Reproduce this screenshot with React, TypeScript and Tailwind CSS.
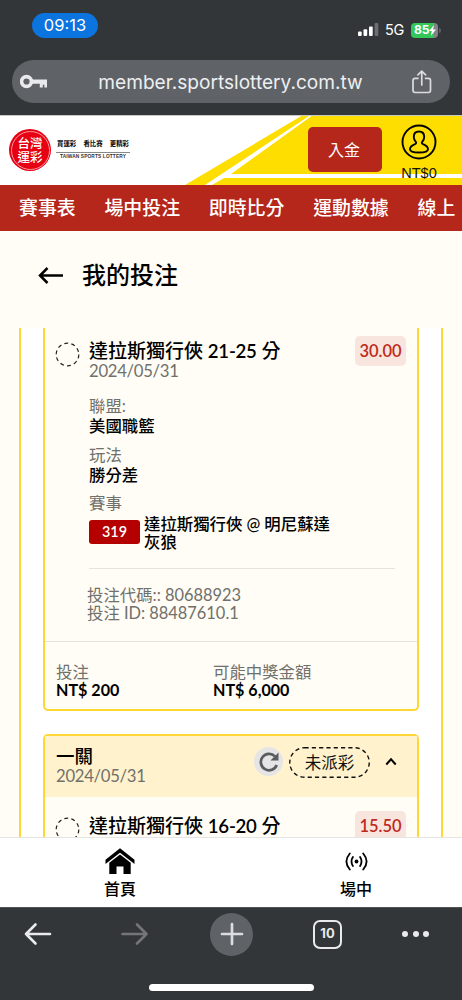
import React from "react";

const LATO = "font-['Lato','Noto_Sans_CJK_TC',sans-serif]";
const CJK = "font-['Noto_Sans_CJK_TC',sans-serif]";

function StatusBar() {
  return (
    <div className="flex h-[60px] items-start justify-between pl-8 pr-[21px] pt-[13px]">
      <div className="flex h-[25px] w-[66px] items-center justify-center rounded-full bg-[#0b74de] font-['Inter',sans-serif] text-[16.5px] font-normal text-white">
        09:13
      </div>
      <div className="flex h-[16px] items-center pt-[17px]">
        <svg width="21" height="14" viewBox="0 0 21 14" className="mr-[6px]">
          <rect x="0" y="8.5" width="3.7" height="4.5" rx="1" fill="#fff" />
          <rect x="5.5" y="6.3" width="3.7" height="6.7" rx="1" fill="#fff" />
          <rect x="11" y="3.4" width="3.7" height="9.6" rx="1" fill="#fff" />
          <rect x="16.6" y="0" width="3.7" height="13" rx="1" fill="#6c6e70" />
        </svg>
        <span className="mr-[6px] w-[20px] font-['Inter',sans-serif] text-[14.5px] leading-4 tracking-[-0.2px] text-white">5G</span>
        <div className="flex h-[15px] w-[27px] items-center rounded-[4px] bg-[linear-gradient(90deg,#33c759_85%,#818487_85%)] pl-[3px]">
          <span className="font-['Inter',sans-serif] text-[12px] font-bold leading-3 text-white">85</span>
          <svg width="7" height="11" viewBox="0 0 7 11">
            <path d="M5 0 0 6h2.8L1.8 11 7 4.5H4z" fill="#fff" />
          </svg>
        </div>
        <div className="ml-px h-[5px] w-[2px] rounded-r-full bg-[#5c5f61]" />
      </div>
    </div>
  );
}

function AddressBar() {
  return (
    <div className="mx-3 flex h-[43px] items-center rounded-full bg-[#5f6368] pl-2 pr-[18px]">
      <svg width="28" height="16" viewBox="0 0 28 16">
        <circle cx="6.5" cy="7.5" r="4.9" fill="none" stroke="#e8eaed" strokeWidth="3.6" />
        <path d="M12 5.5h15v8h-2.6v-2.7h-1.6v2.7h-3v-3.8H12z" fill="#e8eaed" />
      </svg>
      <div className="flex-1 pl-[1px] text-center font-['Inter',sans-serif] text-[19.1px] leading-6 text-[#eeeff0]">
        member.sportslottery.com.tw
      </div>
      <svg width="20" height="24" viewBox="0 0 20 24" fill="none" stroke="#dadce0" strokeWidth="1.7" strokeLinecap="round" strokeLinejoin="round">
        <path d="M6 8.3H3.2Q1 8.3 1 10.5V20.3Q1 22.5 3.2 22.5H16.3Q18.5 22.5 18.5 20.3V10.5Q18.5 8.3 16.3 8.3H13.5" />
        <path d="M9.75 15V1.3M5.9 4.9 9.75 1.2 13.6 4.9" />
      </svg>
    </div>
  );
}

function SiteHeader() {
  return (
    <div className="relative h-[70px] overflow-hidden bg-white">
      <svg className="absolute inset-0" width="462" height="70" viewBox="0 0 462 70">
        <path d="M303 0H462V70H185z" fill="#fedd00" />
        <path d="M310.5 0 205 70H212L231 59 313 0z" fill="#fff" />
        <path d="M227 59H462V63H219z" fill="#fff" />
        <path d="M0 .5H462" stroke="#c9c9c4" strokeWidth="1" />
      </svg>
      <div className="relative flex h-full items-start">
        <div className="ml-[9px] mt-[14px] flex size-[42px] items-center justify-center rounded-full bg-[#e60012]">
          <div className={`flex size-[39px] flex-col items-center justify-center rounded-full border border-[#f79aa0] pb-[1px] text-[12.5px] font-medium leading-[13.5px] text-white ${CJK}`}>
            <span>台灣</span>
            <span>運彩</span>
          </div>
        </div>
        <div className="ml-[5px] mt-[23px] w-[74px] text-center">
          <div className={`flex justify-between border-b border-[#888] px-[1px] pb-[2px] text-[6.4px] font-bold leading-[12px] text-black ${CJK}`}>
            <span>買運彩</span>
            <span>看比賽</span>
            <span>更精彩</span>
          </div>
          <div className="whitespace-nowrap pt-[1px] font-['Liberation_Sans',sans-serif] text-[4.8px] font-bold leading-[6px] tracking-[0.14px] text-[#333]">
            TAIWAN SPORTS LOTTERY
          </div>
        </div>
        <button className={`ml-[178px] mt-[12px] h-[45px] w-[74px] rounded-[5px] bg-[#b5261b] pb-[1px] pr-[2px] text-[16px] leading-6 text-white ${CJK}`}>
          入金
        </button>
        <div className="ml-[17px] mt-[9px] flex w-[40px] flex-col items-center">
          <svg width="36" height="36" viewBox="0 0 36 36" fill="none" stroke="#050500">
            <circle cx="18" cy="18" r="16.5" strokeWidth="1.9" />
            <path strokeWidth="1.9" strokeLinejoin="round" d="M18 7.5C14.5 7.5 12.8 9.8 12.8 12.9C12.8 15 13.7 16.7 14.8 17.9C15.5 18.8 15.1 19.6 14 20.1C11 21.3 9 22.4 9 25.2C9 27.5 12 28.5 18 28.5S27 27.5 27 25.2C27 22.4 25 21.3 22 20.1C20.9 19.6 20.5 18.8 21.2 17.9C22.3 16.7 23.2 15 23.2 12.9C23.2 9.8 21.5 7.5 18 7.5z" />
          </svg>
          <span className="mt-[4px] font-['Liberation_Sans',sans-serif] text-[14.5px] leading-[18px] text-[#151500]">NT$0</span>
        </div>
      </div>
    </div>
  );
}

function SiteNav() {
  return (
    <nav className={`flex h-[46px] items-center gap-[28.8px] overflow-hidden whitespace-nowrap bg-[#b5261b] pl-[19px] text-[18.9px] font-medium leading-[46px] text-white ${CJK}`}>
      {["賽事表", "場中投注", "即時比分", "運動數據", "線上"].map((t) => (
        <span key={t} className="-mt-[2px]">{t}</span>
      ))}
    </nav>
  );
}

function BetRow({ team, range, odds }: { team: string; range: string; odds: string }) {
  return (
    <div className="flex items-start">
      <svg className="ml-[10px] mt-px shrink-0" width="25" height="25" viewBox="0 0 25 25">
        <circle cx="12.5" cy="12.5" r="11.3" fill="none" stroke="#222" strokeWidth="1.2" strokeDasharray="3.9 3.2" />
      </svg>
      <div className="ml-[9px] flex-1">
        <div className="text-[19px] font-medium leading-[20px] text-black">
          {team} <span className="text-[18.6px] font-semibold tracking-[-0.25px]">{range}</span> 分
        </div>
        <div className="text-[16.7px] leading-[20px] tracking-[-0.3px] text-[#70706c]">2024/05/31</div>
      </div>
      <div className="-mt-[5px] mr-[11px] flex h-[30px] w-[51px] items-center justify-center rounded-[5px] bg-[#f8e6de] text-[16.5px] font-semibold text-[#bd2a20]">
        {odds}
      </div>
    </div>
  );
}

function Field({ label, value }: { label: string; value: string }) {
  return (
    <div className="mb-[8.5px] text-[16.4px]">
      <div className="leading-[20px] text-[#70706c]">{label}</div>
      <div className="font-medium leading-[20px] text-black">{value}</div>
    </div>
  );
}

function BetList() {
  return (
    <div className="h-[509px] overflow-hidden">
      <div className="ml-[19px] w-[424px] border-x-2 border-[#fdd835] bg-white px-[22px]">
        <section className="h-[383px] rounded-b-[5px] border-2 border-t-0 border-[#fdd835] bg-[#fffdf5] pt-[13px]">
          <BetRow team="達拉斯獨行俠" range="21-25" odds="30.00" />
          <div className="ml-[44px] pt-[15px]">
            <Field label="聯盟:" value="美國職籃" />
            <Field label="玩法" value="勝分差" />
            <div className="text-[16.4px] leading-[20px] text-[#70706c]">賽事</div>
            <div className="mt-[1px] flex items-start">
              <div className="mr-[4px] mt-[6px] flex h-[24px] w-[51px] items-center justify-center rounded-[3px] bg-[#b50000] text-[14.4px] font-semibold text-white">319</div>
              <div className="w-[196px] pt-px text-[16.4px] font-medium leading-[17.5px] text-black">
                達拉斯獨行俠 @ 明尼蘇達灰狼
              </div>
            </div>
            <div className="mt-[18px] w-[306px] border-t border-[#e5e3dc]" />
            <div className="-ml-[2px] mt-[17px] text-[16.4px] leading-[18px] text-[#70706c]">
              <div>投注代碼:: 80688923</div>
              <div>投注 ID: 88487610.1</div>
            </div>
          </div>
          <div className="mt-[19px] flex border-t border-[#e5e3dc] pt-[21px] text-[16.4px] leading-[18px]">
            <div className="ml-[11px] w-[157px]">
              <div className="text-[#70706c]">投注</div>
              <div className="text-[16.1px] font-bold text-black">NT$ 200</div>
            </div>
            <div>
              <div className="text-[#70706c]">可能中獎金額</div>
              <div className="text-[16.1px] font-bold text-black">NT$ 6,000</div>
            </div>
          </div>
        </section>

        <section className="mt-[23px] h-[140px] rounded-t-[5px] border-2 border-b-0 border-[#fdd835] bg-[#fffdf5]">
          <div className="flex h-[61px] items-start bg-[#fff2cc]">
            <div className="ml-[11px] w-[198px] pt-[10px]">
              <div className="text-[18.5px] font-medium leading-[20px] text-black">一關</div>
              <div className="text-[16.7px] leading-[20px] tracking-[-0.3px] text-[#70706c]">2024/05/31</div>
            </div>
            <div className="mt-[11px] flex size-[29px] items-center justify-center rounded-full bg-[#e5e5e6]">
              <svg width="20" height="20" viewBox="0 0 20 20">
                <path d="M16 4.4A8.2 8.2 0 1 0 17.7 13" fill="none" stroke="#5a5c60" strokeWidth="2.7" />
                <path d="M19.5 .5V8.6H11.4z" fill="#5a5c60" />
              </svg>
            </div>
            <div className="relative ml-[6px] mt-[11px] h-[31px] w-[81px]">
              <svg className="absolute inset-0" width="81" height="31" viewBox="0 0 81 31">
                <rect x=".75" y=".75" width="79.5" height="29.5" rx="14.75" fill="none" stroke="#111" strokeWidth="1.4" strokeDasharray="4.2 3.1" />
              </svg>
              <div className="text-center text-[16.5px] leading-[32px] text-[#111]">未派彩</div>
            </div>
            <svg className="ml-[15px] mt-[21px]" width="12" height="9" viewBox="0 0 12 9">
              <path d="M1.3 7.5 6 2.3 10.7 7.5" fill="none" stroke="#000" strokeWidth="2" />
            </svg>
          </div>
          <div className="pt-[19px]">
            <BetRow team="達拉斯獨行俠" range="16-20" odds="15.50" />
          </div>
        </section>
      </div>
    </div>
  );
}

function TabBar() {
  return (
    <div className={`flex h-[70px] border-t border-[#e4e4e4] bg-white text-[16px] font-medium leading-[20px] text-black ${CJK}`}>
      <div className="ml-[85px] flex w-[70px] flex-col items-center">
        <svg className="mt-[10px]" width="30" height="27" viewBox="0 0 30 27">
          <path d="M15 .3 29.5 11.8V16L15 4.7.5 16V11.8z" fill="#000" />
          <path d="M15 6.5 25.7 14.8V26H18.5V18.5H11.5V26H4.3V14.8z" fill="#000" />
        </svg>
        <span className="mt-[3px]">首頁</span>
      </div>
      <div className="ml-[166px] flex w-[70px] flex-col items-center">
        <svg className="mt-[14px]" width="23" height="19" viewBox="0 0 23 19" fill="none" stroke="#000" strokeWidth="1.8" strokeLinecap="round">
          <circle cx="11.5" cy="9.5" r="1.9" fill="#000" stroke="none" />
          <path d="M7.9 5Q5.1 9.5 7.9 14M15.1 5Q17.9 9.5 15.1 14M4.8 1.5Q-2 9.5 4.8 17.5M18.2 1.5Q25 9.5 18.2 17.5" />
        </svg>
        <span className="mt-[7px]">場中</span>
      </div>
    </div>
  );
}

function BrowserToolbar() {
  return (
    <div className="h-[93px] border-t border-[#515355] bg-[#333639]">
      <div className="flex h-[52px] items-center">
        <svg className="ml-[24px]" width="28" height="24" viewBox="0 0 28 24" fill="none" stroke="#e8eaed" strokeWidth="2.6" strokeLinecap="round" strokeLinejoin="round">
          <path d="M26 12H2M11.5 2.5 2 12 11.5 21.5" />
        </svg>
        <svg className="ml-[69px]" width="28" height="24" viewBox="0 0 28 24" fill="none" stroke="#737577" strokeWidth="2.6" strokeLinecap="round" strokeLinejoin="round">
          <path d="M1.5 12H25.5M16 2.5 25.5 12 16 21.5" />
        </svg>
        <div className="ml-[61px] flex size-[43px] items-center justify-center rounded-full bg-[#5f6368]">
          <svg width="24" height="24" viewBox="0 0 24 24" stroke="#dadce0" strokeWidth="2.7" strokeLinecap="round">
            <path d="M12 2V22M2 12H22" />
          </svg>
        </div>
        <div className="ml-[60px] flex size-[29px] items-center justify-center rounded-[7px] border-[2.5px] border-[#e8eaed] font-['Inter',sans-serif] text-[13px] font-bold text-[#e8eaed]">
          10
        </div>
        <div className="ml-[60px] flex gap-[4.5px]">
          <span className="size-[6px] rounded-full bg-[#e8eaed]" />
          <span className="size-[6px] rounded-full bg-[#e8eaed]" />
          <span className="size-[6px] rounded-full bg-[#e8eaed]" />
        </div>
      </div>
      <div className="ml-[149px] mt-[24px] h-[7px] w-[165px] rounded-full bg-white" />
    </div>
  );
}

export default function App() {
  return (
    <div className={`h-[1000px] w-[462px] overflow-hidden bg-[#fffdf5] ${LATO}`}>
      <div className="h-[115px] bg-[#333639]">
        <StatusBar />
        <AddressBar />
      </div>
      <SiteHeader />
      <SiteNav />
      <div className="flex h-[97px] items-start pl-[38px] pt-[29px]">
        <svg className="mt-[7px]" width="26" height="17" viewBox="0 0 26 17" fill="none" stroke="#000" strokeWidth="2.5">
          <path d="M25 8.5H2M9.5 1 2 8.5 9.5 16" />
        </svg>
        <h1 className="ml-[18px] text-[24px] font-medium leading-[30px] text-black">我的投注</h1>
      </div>
      <BetList />
      <TabBar />
      <BrowserToolbar />
    </div>
  );
}
